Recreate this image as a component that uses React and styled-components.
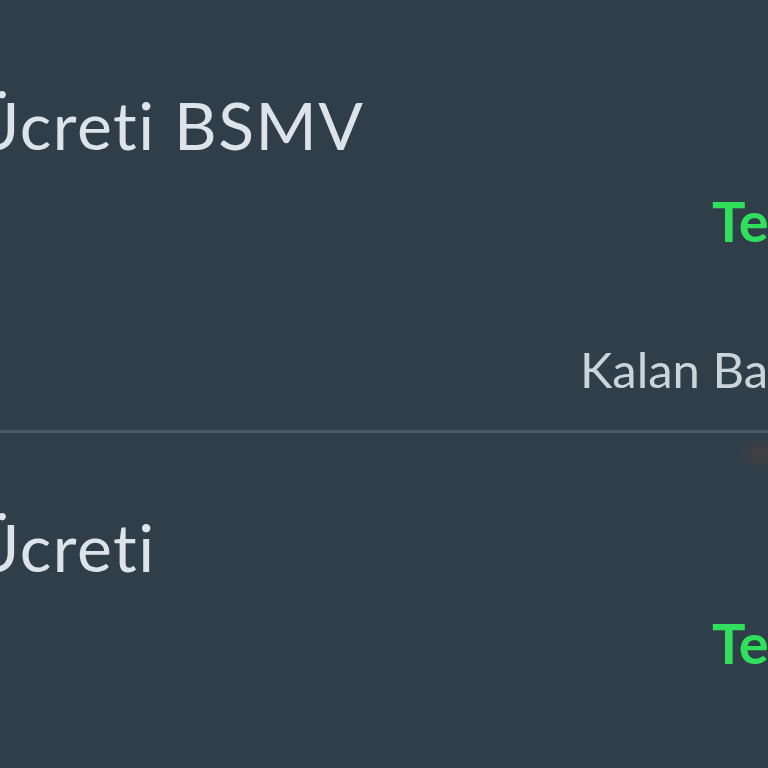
import React from "react";
import styled, { createGlobalStyle } from "styled-components";

const GlobalStyle = createGlobalStyle`
  html, body {
    margin: 0;
    padding: 0;
    background: #2f3e48;
    overflow: hidden;
  }
  body {
    font-family: Lato, "Open Sans", "DejaVu Sans", sans-serif;
    font-variant-ligatures: none;
  }
`;

const List = styled.div`
  position: relative;
  width: 768px;
  height: 768px;
  padding-top: 11px;
  box-sizing: border-box;
  background: #2f3e48;
  overflow: hidden;
`;

const Row = styled.div`
  position: relative;
  display: flex;
  flex-direction: column;
  padding-top: 74px;
  padding-bottom: 31px;
  border-bottom: ${(p) => (p.$last ? "none" : "3px solid #4a5a64")};
`;

const Title = styled.div`
  margin-left: -29px;
  font-size: 66px;
  line-height: 1.2;
  font-weight: 400;
  letter-spacing: 1.5px;
  color: #dde3e8;
  white-space: nowrap;
`;

const Status = styled.div`
  margin-top: 23px;
  padding-left: 712px;
  font-size: 56px;
  line-height: 1.2;
  font-weight: 700;
  color: #30df5b;
  white-space: nowrap;
`;

const Balance = styled.div`
  margin-top: 86px;
  padding-left: 580px;
  font-size: 49px;
  line-height: 1.2;
  font-weight: 400;
  color: #ccd4da;
  white-space: nowrap;
`;

const Smudge = styled.div`
  position: absolute;
  right: -14px;
  bottom: -42px;
  width: 44px;
  height: 36px;
  border-radius: 50%;
  background: radial-gradient(closest-side, rgba(92, 64, 60, 0.55), rgba(92, 64, 60, 0));
  pointer-events: none;
`;

const rows = [
  { title: "Ücreti BSMV", status: "Tediye Edildi", balance: "Kalan Bakiye" },
  { title: "Ücreti", status: "Tediye Edildi", balance: "Kalan Bakiye" },
];

export default function App() {
  return (
    <>
      <GlobalStyle />
      <List>
        {rows.map((r, i) => (
          <Row key={i} $last={i === rows.length - 1}>
            <Title>{r.title}</Title>
            <Status>{r.status}</Status>
            <Balance>{r.balance}</Balance>
            {i === 0 && <Smudge />}
          </Row>
        ))}
      </List>
    </>
  );
}
